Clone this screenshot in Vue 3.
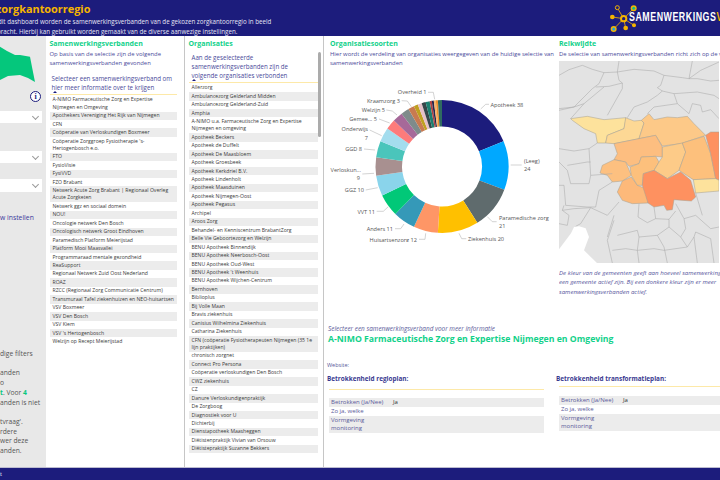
<script setup>
const swv = [
  'A-NIMO Farmaceutische Zorg en Expertise Nijmegen en Omgeving',
  'Apothekers Vereniging Het Rijk van Nijmegen', 'CFN', 'Coöperatie van Verloskundigen Boxmeer',
  "Coöperatie Zorggroep Fysiotherapie 's-Hertogenbosch e.o.", 'FTO', 'FysioVisie', 'FysiVVD', 'FZO Brabant',
  'Netwerk Acute Zorg Brabant | Regionaal Overleg Acute Zorgketen', 'Netwerk ggz en sociaal domein', 'NOU!',
  'Oncologie netwerk Den Bosch', 'Oncologisch netwerk Groot Eindhoven', 'Paramedisch Platform Meierijstad',
  'Platform Mooi Maasvallei', 'Programmaraad mentale gezondheid', 'ReaSupport', 'Regionaal Netwerk Zuid Oost Nederland',
  'ROAZ', 'RZCC (Regionaal Zorg Communicatie Centrum)', 'Transmuraal Tafel ziekenhuizen en NEO-huisartsen',
  'VSV Boxmeer', 'VSV Den Bosch', 'VSV Kiem', "VSV 's Hertogenbosch", 'Welzijn op Recept Meierijstad'
]

const orgs = [
  'Allerzorg', 'Ambulancezorg Gelderland Midden', 'Ambulancezorg Gelderland-Zuid', 'Amphia',
  'A-NIMO u.a. Farmaceutische Zorg en Expertise Nijmegen en omgeving', 'Apotheek Beckers', 'Apotheek de Duffelt',
  'Apotheek De Maasbloem', 'Apotheek Groesbeek', 'Apotheek Kerkdriel B.V.', 'Apotheek Lindenholt', 'Apotheek Maasduinen',
  'Apotheek Nijmegen-Oost', 'Apotheek Pegasus', 'Archipel', 'Aroos Zorg', 'Behandel- en Kenniscentrum BrabantZorg',
  'Belle Vie Geboortezorg en Welzijn', 'BENU Apotheek Binnendijk', 'BENU Apotheek Neerbosch-Oost', 'BENU Apotheek Oud-West',
  "BENU Apotheek 't Weenhuis", 'BENU Apotheek Wijchen-Centrum', 'Bernhoven', 'Biblioplus', 'Bij Volle Maan', 'Bravis ziekenhuis',
  'Canisius Wilhelmina Ziekenhuis', 'Catharina Ziekenhuis', 'CFN (coöperatie Fysiotherapeuten Nijmegen (35 1e lijn praktijken)',
  'chronisch zorgnet', 'Connect Pro Persona', 'Coöperatie verloskundigen Den Bosch', 'CWZ ziekenhuis', 'CZ',
  'Danure Verloskundigenpraktijk', 'De Zorgboog', 'Diagnostiek voor U', 'Dichterbij', 'Dienstapotheek Maasheggen',
  'Diëtistenpraktijk Vivian van Orsouw', 'Diëtistepraktijk Suzanne Bekkers'
]

const values = [
  [38, '#1c1c7c'], [24, '#00a8ff'], [21, '#5f6b6d'], [20, '#ffc000'], [12, '#fe9666'], [11, '#3599b8'], [11, '#01c878'],
  [10, '#8ad4eb'], [9, '#a89090'], [8, '#4ac5bb'], [7, '#a4ddee'], [5, '#fd7b7b'], [5, '#a66999'], [4, '#7f8b8b'],
  [3, '#c87a50'], [2, '#bfa020'], [2, '#e6c0c8'], [2, '#374649'], [2, '#1c8070'], [1, '#b04040'], [1, '#26264f'],
  [1, '#f5b56a'], [1, '#f09030'], [2, '#2f6b60']
]
const total = values.reduce((s, v) => s + v[0], 0)
const cx = 443, cy = 166.5, R = 66.5, r = 40
const pt = (rad, a) => `${(cx + rad * Math.sin(a)).toFixed(2)} ${(cy - rad * Math.cos(a)).toFixed(2)}`
let acc = 0
const slices = values.map(([v, color]) => {
  const a0 = (acc / total) * Math.PI * 2
  acc += v
  const a1 = (acc / total) * Math.PI * 2
  const large = a1 - a0 > Math.PI ? 1 : 0
  return { color, d: `M${pt(R, a0)} A${R} ${R} 0 ${large} 1 ${pt(R, a1)} L${pt(r, a1)} A${r} ${r} 0 ${large} 0 ${pt(r, a0)} Z` }
})

const labels = [
  { x: 491.5, y: 106.5, a: 'start', t: 'Apotheek 38' }, { x: 525, y: 163, a: 'start', t: '(Leeg)' }, { x: 525, y: 171, a: 'start', t: '24' },
  { x: 500, y: 220, a: 'start', t: 'Paramedische zorg' }, { x: 500, y: 228, a: 'start', t: '21' },
  { x: 469, y: 241, a: 'start', t: 'Ziekenhuis 20' }, { x: 418, y: 241.5, a: 'end', t: 'Huisartsenzorg 12' },
  { x: 394, y: 231, a: 'end', t: 'Anders 11' }, { x: 376, y: 213.5, a: 'end', t: 'VVT 11' }, { x: 365, y: 192, a: 'end', t: 'GGZ 10' },
  { x: 362, y: 171.5, a: 'end', t: 'Verloskun...' }, { x: 361, y: 179.5, a: 'end', t: '9' }, { x: 363, y: 151, a: 'end', t: 'GGD 8' },
  { x: 369, y: 131, a: 'end', t: 'Onderwijs' }, { x: 369, y: 139.5, a: 'end', t: '7' }, { x: 378, y: 121, a: 'end', t: 'Gemee... 5' },
  { x: 386, y: 112, a: 'end', t: 'Welzijn 5' }, { x: 401, y: 102.7, a: 'end', t: 'Kraamzorg 3' }, { x: 427.5, y: 94.3, a: 'end', t: 'Overheid 1' }
]
const leaders = [
  '481.7,109 486.7,104.3 490,104.3', '511.7,165 522.7,165', '488.3,216.7 493.3,221.7 497.6,221.7', '460,233.3 462.7,238.7 467.3,238.7',
  '426.7,233.3 426,239.3 420,239.3', '405,224 401.7,228.7 396,228.7', '389.3,206.7 384.3,211.3 377.7,211.3', '378.7,187.7 366.7,190',
  '375,173.3 363.3,174', '376,150 365,149', '382.7,135.7 370.7,130', '390.7,123 380,119', '398,115 393.3,111 387.3,110',
  '412.3,106.7 408.3,101 402.7,100.7', '435.7,99.3 434.3,92.3 429,92.3'
]

const regions = [
  ['#fde29c', '50,355 100,348 150,358 215,352 215,360 210,385 160,405 155,428 130,428 125,400 90,385 55,360'],
  ['#fdd895', '215,352 240,362 262,360 270,368 255,415 180,430 155,428 160,405 210,385'],
  ['#fdc988', '262,360 285,340 300,358 340,350 370,352 400,348 420,370 455,405 380,430 325,437 305,405 255,415 270,368'],
  ['#fdbe80', '180,430 255,415 305,405 325,440 325,470 305,468 262,470 255,490 225,498 215,485 180,478 190,460'],
  ['#fdc080', '180,478 215,485 232,525 205,542 175,545 160,525 138,518 145,495'],
  ['#fdb97a', '232,530 250,555 275,565 282,608 235,610 205,600 190,575 205,542'],
  ['#fdc07c', '262,470 305,468 315,485 300,510 268,520 265,555 250,555 232,525 228,500 255,490'],
  ['#fdcb88', '325,440 385,428 395,455 375,510 340,535 300,510 315,485 325,470'],
  ['#fdc07c', '385,428 450,408 470,460 485,535 418,538 375,510 395,455'],
  ['#fe9160', '268,520 300,510 340,535 380,515 410,540 425,590 412,602 360,598 355,628 338,630 330,615 300,620 282,608 265,555'],
  ['#fe9160', '455,405 470,395 495,395 495,540 485,535 470,460'],
  ['#fde29c', '418,538 485,535 495,540 495,572 425,578']
]
const borders = [
  '15,225 45,208 85,195 115,207 150,217 135,250 115,265 60,320 15,325', '150,217 190,215 195,182',
  '190,215 240,207 300,212 330,225 385,232 405,235 415,182', '190,215 195,240 205,248 165,258 125,260',
  '205,248 205,265 160,345', '330,225 320,255 310,262 325,272 310,285 280,305 240,320 220,352',
  '405,235 440,210 495,185', '405,235 430,235 470,242 495,240', '360,280 430,275 480,285 495,295',
  '360,280 370,310 405,340 415,310 440,315 445,335 470,328 495,355', '325,272 360,280', '280,340 300,320 370,310',
  '15,330 60,320 90,310 50,355', '90,310 150,260',
  '15,445 60,452 105,445 130,428', '105,445 110,525 175,520', '15,485 40,510 50,550 105,550 110,525', '40,495 100,485 110,485',
  '15,555 30,555 35,615 100,620 125,620 135,570 175,545', '30,615 25,630 60,625 110,622 160,645 195,605',
  '25,630 45,645 40,675 15,670', '110,622 80,670 65,678', '255,610 252,650 280,667 305,655 300,620', '305,655 345,657 365,632',
  '365,610 390,655 425,645 470,685 495,680', '425,578 445,645', '345,657 345,680 380,710 395,685 390,655',
  '160,710 180,645', '190,705 250,690 255,710 310,705 345,680', '420,710 425,695 470,715', '180,660 160,720 175,788',
  '255,710 250,750 255,788', '310,705 330,740 340,788', '380,710 400,740 420,710 430,788', '250,750 300,745 330,750 400,740',
  '470,715 480,788', '175,750 215,745 250,750'
]
</script>

<template>
  <div class="page">
    <header class="top">
      <div class="intro">
        <h1 class="title">zorgkantoorregio</h1>
        <p class="lead lead-a">dit dashboard worden de samenwerkingsverbanden van de gekozen zorgkantoorregio in beeld</p>
        <p class="lead lead-b">bracht. Hierbij kan gebruikt worden gemaakt van de diverse aanwezige instellingen.</p>
      </div>
      <div class="logo">
        <svg class="logo-mark" viewBox="160 5 90 95" width="30" height="31.7">
          <g stroke="#f5b400" stroke-width="2.4" fill="none">
            <path d="M207 55L188 22M207 55L237 24M207 55L173 50M207 55L177 86M207 55L213 83M207 55L238 75" />
          </g>
          <circle cx="207" cy="55" r="11" fill="#f5b400" /><circle cx="207" cy="55" r="5" fill="#1c1c7c" />
          <circle cx="188" cy="22" r="6" fill="#1c1c7c" stroke="#f5b400" stroke-width="3" />
          <circle cx="237" cy="24" r="9" fill="#f5b400" /><circle cx="237" cy="24" r="4.5" fill="#10c090" />
          <circle cx="173" cy="50" r="7" fill="#f5b400" />
          <circle cx="177" cy="86" r="9" fill="#f5b400" /><circle cx="177" cy="86" r="4.5" fill="#20a8e0" />
          <circle cx="213" cy="83" r="7" fill="#f5b400" /><circle cx="238" cy="75" r="6" fill="#f5b400" />
        </svg>
        <span class="logo-text">SAMENWERKINGS<b>V</b></span>
      </div>
    </header>

    <div class="body">
      <aside class="side">
        <svg class="region" viewBox="0 36 46 56" width="46" height="56">
          <path d="M0 46.7L7 51L15 55L20 55L30 56.7L32 67L35 82L28 78L20 75L8 76L0 80Z" fill="#05c77c" />
        </svg>
        <span class="info">i</span>
        <div class="select s1"><i class="chev"></i></div>
        <div class="select s2"><i class="chev"></i></div>
        <div class="select s3"><i class="chev"></i></div>
        <div class="reset">w instellen</div>
        <div class="notes">
          <p class="n-gap">dige filters</p>
          <p>anden</p>
          <p>o</p>
          <p><b>t</b>. Voor <b>4</b></p>
          <p class="n-end">anden is niet</p>
          <p>tvraag'.</p>
          <p>rdere</p>
          <p>wer deze</p>
          <p>anden.</p>
        </div>
      </aside>

      <section class="col col-a">
        <h2 class="sec">Samenwerkingsverbanden</h2>
        <p class="txt">Op basis van de selectie zijn de volgende samenwerkingsverbanden gevonden</p>
        <p class="txt pick">Selecteer een samenwerkingsverband om hier meer informatie over te krijgen</p>
        <div class="sort"><span class="tri"></span></div>
        <ul class="list">
          <li v-for="n in swv" :key="n">{{ n }}</li>
        </ul>
      </section>

      <section class="col col-b">
        <h2 class="sec">Organisaties</h2>
        <p class="txt pick-b">Aan de geselecteerde samenwerkingsverbanden zijn de volgende organisaties verbonden</p>
        <div class="sort"><span class="tri"></span></div>
        <ul class="list">
          <li v-for="n in orgs" :key="n">{{ n }}</li>
        </ul>
        <span class="thumb"></span>
      </section>

      <main class="main">
        <div class="upper">
          <section class="donut-box">
            <h2 class="sec">Organisatiesoorten</h2>
            <p class="txt">Hier wordt de verdeling van organisaties weergegeven van de huidige selectie van samenwerkingsverbanden</p>
            <svg class="donut" viewBox="326 72 232 170" width="232" height="170">
              <path v-for="(s, i) in slices" :key="i" :d="s.d" :fill="s.color" />
              <polyline v-for="(l, i) in leaders" :key="'l' + i" :points="l" fill="none" stroke="#b5b5b5" stroke-width=".6" />
              <text v-for="(l, i) in labels" :key="'t' + i" :x="l.x" :y="l.y" :text-anchor="l.a" class="lab">{{ l.t }}</text>
            </svg>
          </section>
          <section class="map-box">
            <h2 class="sec">Reikwijdte</h2>
            <p class="txt nowrap">De selectie van samenwerkingsverbanden richt zich op de volgende gemeenten</p>
            <svg class="map" viewBox="15 182 480 606" width="160" height="202">
              <rect x="15" y="182" width="480" height="606" fill="#e3e3e3" />
              <polygon v-for="(g, i) in regions" :key="i" :points="g[1]" :fill="g[0]" stroke="#a8a294" stroke-width="1.6" />
              <polyline v-for="(b, i) in borders" :key="'b' + i" :points="b" fill="none" stroke="#a9a9a9" stroke-width="1.6" />
              <polygon points="15,747 51,699 60,680 75,678 95,684 105,710 90,750 129,788 15,788" fill="#fff" />
            </svg>
            <p class="cap">De kleur van de gemeenten geeft aan hoeveel samenwerkingsverbanden in een gemeente actief zijn. Bij een donkere kleur zijn er meer samenwerkingsverbanden actief.</p>
          </section>
        </div>

        <section class="detail">
          <p class="hint">Selecteer een samenwerkingsverband voor meer informatie</p>
          <h3 class="name">A-NIMO Farmaceutische Zorg en Expertise Nijmegen en Omgeving</h3>
          <p class="web">Website:</p>
          <div class="plans">
            <div class="plan">
              <h4>Betrokkenheid regioplan:</h4>
              <div class="plan-rule"></div>
              <div class="grid"><span class="k">Betrokken (Ja/Nee)</span><span class="v">Ja</span></div>
              <div class="grid odd"><span class="k">Zo ja, welke</span><span class="v"></span></div>
              <div class="grid"><span class="k">Vormgeving monitoring</span><span class="v"></span></div>
            </div>
            <div class="plan plan-r">
              <h4>Betrokkenheid transformatieplan:</h4>
              <div class="plan-rule rule-r"></div>
              <div class="grid"><span class="k">Betrokken (Ja/Nee)</span><span class="v">Ja</span></div>
              <div class="grid odd"><span class="k">Zo ja, welke</span><span class="v"></span></div>
              <div class="grid"><span class="k">Vormgeving monitoring</span><span class="v"></span></div>
            </div>
          </div>
        </section>
      </main>
    </div>

    <footer class="foot"><span>t</span></footer>
  </div>
</template>

<style>
html, body { margin: 0; background: #fff; }
</style>

<style scoped>
.page {
  width: 720px; height: 480px; overflow: hidden; display: flex; flex-direction: column;
  font-family: "Open Sans", "Noto Sans", sans-serif; color: #4a4a9a; background: #fff;
}
p, h1, h2, h3, h4, ul { margin: 0; padding: 0; }
.top { height: 36px; flex: none; background: #1c1c7c; display: flex; justify-content: space-between; overflow: hidden; }
.intro { flex: none; width: 400px; overflow: hidden; }
.title { font-size: 10.9px; line-height: 16px; font-weight: 700; color: #f5b400; margin: 1px 0 0 -4px; white-space: nowrap; }
.lead { font-size: 6.2px; line-height: 9.6px; color: #e6e6f5; white-space: nowrap; }
.lead-a { margin-left: -2px; }
.lead-b { margin-left: -3px; }
.logo { width: 110px; flex: none; position: relative; overflow: hidden; }
.logo-mark { position: absolute; left: -2px; top: 1.7px; }
.logo-text {
  position: absolute; left: 19px; top: 10px; color: #fff; font: 700 13.4px/14px "Liberation Sans", sans-serif;
  letter-spacing: .8px; transform: scaleX(.66); transform-origin: left top; white-space: nowrap;
}
.logo-text b { color: #f5b400; }

.body { flex: 1; min-height: 0; display: flex; }
.side { width: 46px; flex: none; background: #e8e8e8; position: relative; overflow: hidden; display: flex; flex-direction: column; }
.region { display: block; flex: none; }
.info {
  position: absolute; left: 30px; top: 55px; width: 9px; height: 9px; border: 1.6px solid #1c1c7c; border-radius: 50%;
  background: #fff; color: #1c1c7c; font: 700 8px/9px "Liberation Serif", serif; text-align: center;
}
.select { height: 12px; width: 42px; background: #fff; position: relative; flex: none; }
.s1 { margin-top: 19px; }
.s2 { margin-top: 28px; }
.s3 { margin-top: 16px; height: 13px; }
.chev {
  position: absolute; right: 4px; top: 3px; width: 4px; height: 4px; transform: rotate(45deg);
  border-right: 1px solid #9a9a9a; border-bottom: 1px solid #9a9a9a;
}
.reset { font-size: 6.8px; line-height: 9px; color: #3a3a9c; margin: 21px 0 0 0; white-space: nowrap; }
.notes { margin-top: 127px; font-size: 6.7px; line-height: 9.7px; color: #555; white-space: nowrap; }
.notes b { color: #05c77c; }
.n-gap { margin-bottom: 9.7px; }
.n-end { margin-bottom: 9.7px; }

.col { flex: none; position: relative; border-right: 1.5px solid #c6c6c6; overflow: hidden; background: #fff; }
.col-a { padding: 3px 7.5px 0 3.5px; width: 127px; }
.col-b { padding: 3px 5.5px 0 3.5px; width: 129px; }
.sec { font-size: 7px; line-height: 10px; font-weight: 700; color: #12d18a; white-space: nowrap; }
.txt { font-size: 5.9px; line-height: 9.2px; color: #4a4a9a; margin-top: 1px; }
.pick { margin: 5.5px 0 0 2px; font-size: 6.2px; }
.pick-b { margin: 3.5px 0 0 3px; width: 112px; font-size: 6.2px; }
.sort { height: 3px; border-bottom: 1px solid #fde9a8; position: relative; margin-top: -1px; }
.tri {
  position: absolute; left: 3px; top: 0; width: 0; height: 0;
  border-left: 2px solid transparent; border-right: 2px solid transparent; border-bottom: 2.5px solid #1c1c7c;
}
.list { list-style: none; margin-top: .5px; }
.list li { font-size: 5.1px; line-height: 7.3px; padding: .58px 1px .58px 3px; color: #3a3a3a; }
.list li:nth-child(even) { background: #ececec; }
.thumb { position: absolute; right: 2px; top: 16px; width: 3.5px; height: 85px; border-radius: 2px; background: #ababab; }

.main { flex: 1; min-width: 0; display: flex; flex-direction: column; overflow: hidden; }
.upper { display: flex; height: 289px; flex: none; }
.donut-box { width: 229px; flex: none; padding: 3px 0 0 6px; position: relative; }
.donut-box .txt { width: 226px; }
.donut { display: block; margin-left: -5px; margin-top: 3.6px; }
.lab { font-size: 5.6px; fill: #555; }
.map-box { flex: 1; min-width: 0; padding: 3px 0 0 0; overflow: hidden; }
.nowrap { white-space: nowrap; }
.map { display: block; margin-top: 1.5px; }
.cap { font-size: 6.1px; line-height: 9.4px; font-style: italic; color: #5a5aa0; margin-top: 5px; width: 206px; }

.detail { flex: 1; padding: 0 0 0 3px; }
.hint { font-size: 6.4px; line-height: 8px; font-style: italic; color: #5a5a9a; margin-left: 1px; }
.name { font-size: 8.7px; line-height: 12px; font-weight: 700; color: #12d18a; white-space: nowrap; margin-left: 1px; }
.web { font-size: 5.5px; line-height: 8px; margin-top: 16px; color: #5a5a9a; }
.plans { display: flex; margin-top: 5px; }
.plan { width: 229px; flex: none; }
.plan-r { flex: 1; }
.plan h4 { font-size: 6.4px; line-height: 9px; font-weight: 700; color: #3a3a90; white-space: nowrap; }
.plan-rule { height: 1px; background: #fde9a8; margin: 6px 0 8px 2px; width: 215px; }
.rule-r { margin: 3px 0 9px 3px; width: 170px; }
.plan-r .grid { margin-left: 3px; width: 170px; }
.grid { width: 215px; margin-left: 2px; display: flex; background: #ececec; font-size: 6px; line-height: 7.9px; color: #5a5a9a; }
.grid.odd { background: #fff; }
.k { width: 56px; flex: none; padding: .6px 4px .6px 2px; }
.v { padding: .6px 2px; color: #333; }
.foot { height: 13px; flex: none; background: #1c1c7c; border-top: 1px solid #bcbcd0; box-sizing: border-box; color: #fff; font-size: 5.5px; line-height: 12px; }
</style>
